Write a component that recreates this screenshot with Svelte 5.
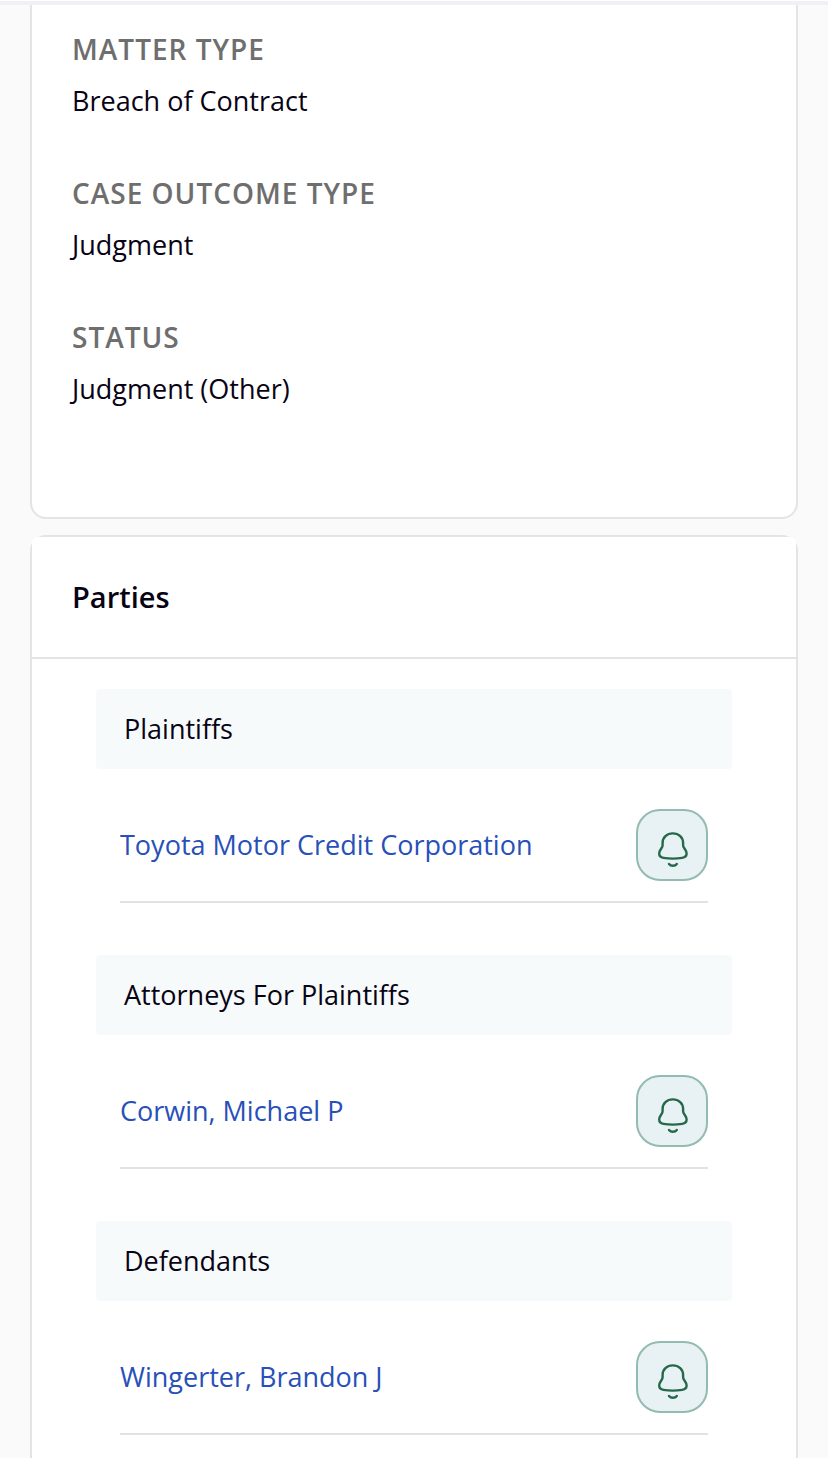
<script lang="ts">
  type Detail = { label: string; value: string };
  type PartyGroup = { title: string; members: string[] };

  const details: Detail[] = [
    { label: 'Matter Type', value: 'Breach of Contract' },
    { label: 'Case Outcome Type', value: 'Judgment' },
    { label: 'Status', value: 'Judgment (Other)' },
  ];

  const groups: PartyGroup[] = [
    { title: 'Plaintiffs', members: ['Toyota Motor Credit Corporation'] },
    { title: 'Attorneys For Plaintiffs', members: ['Corwin, Michael P'] },
    { title: 'Defendants', members: ['Wingerter, Brandon J'] },
  ];
</script>

<div class="page">
  <div class="topbar"></div>

  <section class="card card--details">
    <dl class="details">
      {#each details as detail (detail.label)}
        <div class="detail">
          <dt>{detail.label}</dt>
          <dd>{detail.value}</dd>
        </div>
      {/each}
    </dl>
  </section>

  <section class="card card--parties">
    <header class="card-header">
      <h2>Parties</h2>
    </header>
    <div class="groups">
      {#each groups as group (group.title)}
        <section class="group">
          <h3>{group.title}</h3>
          <ul>
            {#each group.members as member (member)}
              <li>
                <a href="#party">{member}</a>
                <button type="button" class="alert-btn" aria-label={`Get alerts for ${member}`}>
                  <svg viewBox="0 0 40 40" aria-hidden="true">
                    <path
                      d="M20.8 8.4C14.8 8.4 10.6 12.6 10.6 17.8V20.2C10.6 23.2 7.2 24.6 7.2 28.6C7.2 31.2 8.8 32.5 11.4 32.9C17.4 33.8 24.2 33.8 30.2 32.9C32.8 32.5 34.6 31.2 34.6 28.6C34.6 24.6 31.1 23.2 31.1 20.2V17.8C31.1 12.6 26.8 8.4 20.8 8.4Z"
                    />
                    <path d="M17 39C18.8 41.4 23 41.4 24.8 39" />
                  </svg>
                </button>
              </li>
            {/each}
          </ul>
        </section>
      {/each}
    </div>
  </section>
</div>

<style>
  :global(body) {
    background: #fafafa;
  }

  .page {
    display: flex;
    flex-direction: column;
    min-height: 100vh;
    font-family: 'Open Sans', 'Noto Sans', sans-serif;
    font-size: 27px;
    line-height: 40px;
    color: #080314;
  }

  .topbar {
    height: 4px;
    border-top: 1px solid #fff;
    background: #eff1f4;
  }

  .card {
    margin: 0 30px;
    border: 2px solid #e4e4e4;
    background: #fff;
  }

  .card--details {
    margin-bottom: 16px;
    padding: 24px 40px 56px;
    border-top: none;
    border-radius: 0 0 16px 16px;
  }

  .details {
    margin: 0;
  }

  .detail {
    margin-bottom: 52px;
  }

  dt {
    margin-bottom: 12px;
    font-size: 28px;
    font-weight: 600;
    letter-spacing: 1px;
    text-transform: uppercase;
    color: #6e6e6e;
  }

  dd {
    margin: 0;
  }

  .card--parties {
    flex: 1;
    border-bottom: none;
    border-radius: 16px 16px 0 0;
  }

  .card-header {
    padding: 40px;
    border-bottom: 2px solid #e4e4e4;
    border-radius: 6px 6px 0 0;
    background: #fff;
  }

  h2 {
    margin: 0;
    font-size: 29px;
    font-weight: 600;
  }

  .groups {
    display: flex;
    flex-direction: column;
    gap: 52px;
    padding: 30px 64px 0;
  }

  h3 {
    margin: 0;
    padding: 20px 28px;
    border-radius: 4px;
    background: #f6fafb;
    font-size: 27px;
    font-weight: 400;
  }

  ul {
    margin: 0;
    padding: 20px 24px 0;
    list-style: none;
  }

  li {
    display: flex;
    align-items: center;
    justify-content: space-between;
    gap: 24px;
    padding: 20px 0;
    border-bottom: 2px solid #e2e2e2;
  }

  a {
    color: #2850b8;
    text-decoration: none;
  }

  a:hover {
    text-decoration: underline;
  }

  .alert-btn {
    display: flex;
    flex: none;
    align-items: center;
    justify-content: center;
    width: 72px;
    height: 72px;
    padding: 0;
    border: 2px solid #93bbb0;
    border-radius: 24px;
    background: #e8f1f4;
    color: #25684a;
    cursor: pointer;
  }

  .alert-btn svg {
    width: 40px;
    height: 40px;
    overflow: visible;
    fill: none;
    stroke: currentColor;
    stroke-width: 2.4;
    stroke-linecap: round;
    stroke-linejoin: round;
  }
</style>
